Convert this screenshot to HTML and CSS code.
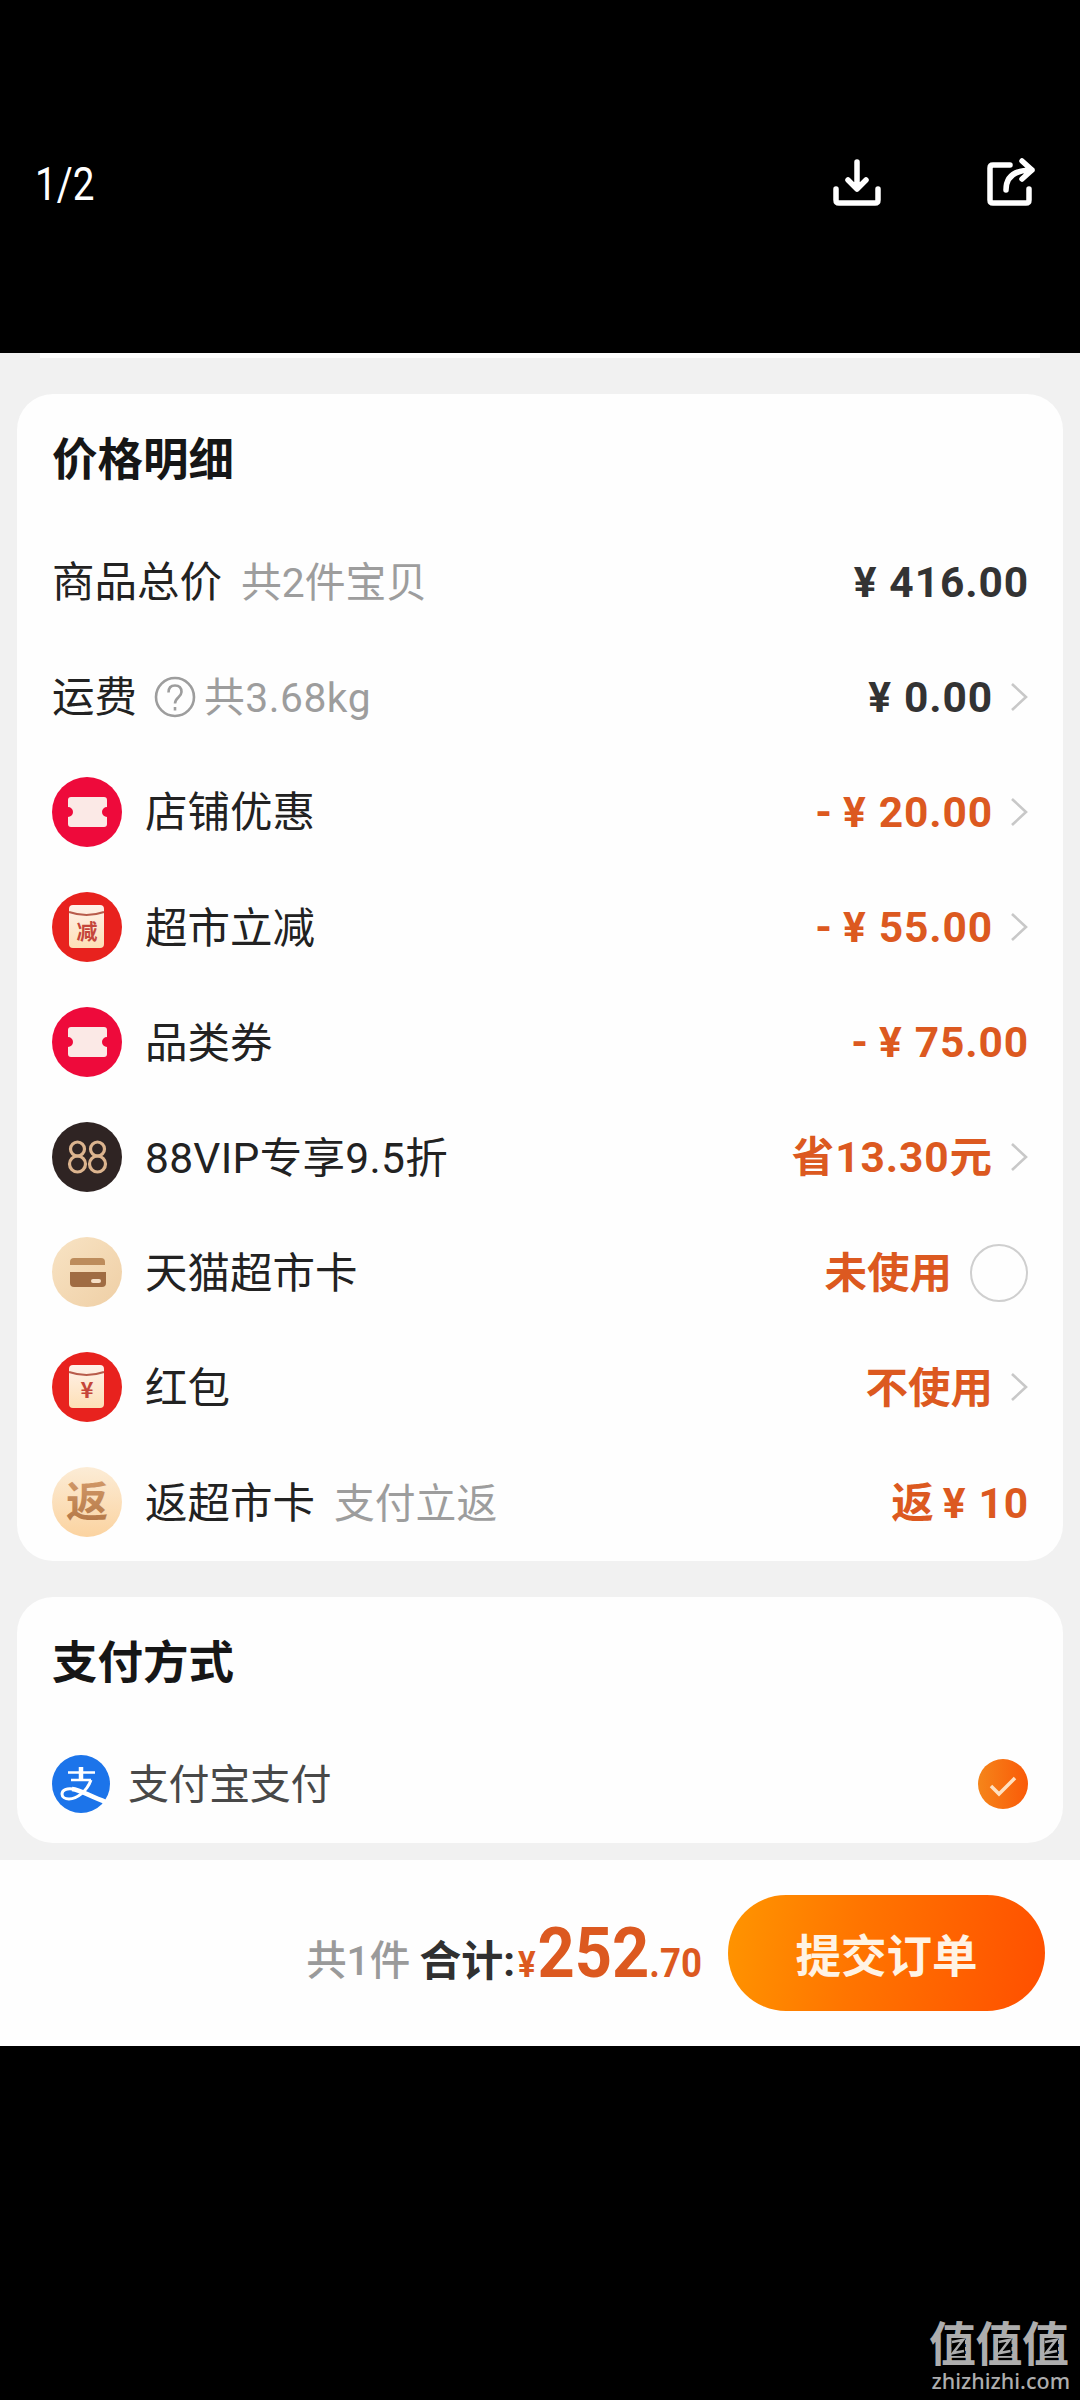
FILE: index.html
```html
<!DOCTYPE html>
<html lang="zh-CN">
<head>
<meta charset="utf-8">
<title>价格明细</title>
<link rel="stylesheet" href="styles.css">
</head>
<body>
<svg class="defs" aria-hidden="true">
  <defs>
    <linearGradient id="cream" x1="0" y1="0" x2="0" y2="1"><stop offset="0" stop-color="#fff1ea"/><stop offset="1" stop-color="#fde0b6"/></linearGradient>
    <linearGradient id="sand" x1="0" y1="0" x2="1" y2="1"><stop offset="0" stop-color="#f8e3c4"/><stop offset="1" stop-color="#efcfa5"/></linearGradient>
    <linearGradient id="peach" x1="0" y1="0" x2="0" y2="1"><stop offset="0" stop-color="#fcecd6"/><stop offset="1" stop-color="#fbd3a0"/></linearGradient>
    <linearGradient id="brown" x1="0" y1="0" x2="0" y2="1"><stop offset="0" stop-color="#d9a070"/><stop offset="1" stop-color="#b07443"/></linearGradient>
    <linearGradient id="orange" x1="0" y1="0" x2="1" y2="0"><stop offset="0" stop-color="#f5851a"/><stop offset="1" stop-color="#fa5a08"/></linearGradient>
    <symbol id="chevron" viewBox="0 0 18 30"><path d="M2 2 16 15 2 28" fill="none" stroke="#c8c8c8" stroke-width="2.6"/></symbol>
    <symbol id="ticket" viewBox="0 0 70 70"><circle cx="35" cy="35" r="35" fill="#ee0a3b"/><path d="M19 20h33a3 3 0 0 1 3 3v7a5 5 0 0 0 0 10v7a3 3 0 0 1-3 3H19a3 3 0 0 1-3-3v-7a5 5 0 0 0 0-10v-7a3 3 0 0 1 3-3Z" fill="#fbe9e6"/></symbol>
    <symbol id="packet" viewBox="0 0 70 70"><circle cx="35" cy="35" r="35" fill="#e8221e"/><rect x="17" y="13" width="35" height="43" rx="4" fill="url(#cream)"/><path d="M17 20q17.500 6 35 0" fill="none" stroke="#b85b4b" stroke-width="2"/></symbol>
  </defs>
</svg>
<header class="viewer-bar">
  <span class="counter">1/2</span>
  <div class="tools">
    <svg class="tool" viewBox="0 0 50 50" fill="none" stroke="#fff" stroke-width="5.500" stroke-linecap="round" stroke-linejoin="round"><path d="M26 5v27M17 23l9 9 9-9M5 32v11q0 3 3 3h36q3 0 3-3V32"/></svg>
    <svg class="tool" viewBox="0 0 50 50" fill="none" stroke="#fff" stroke-width="5.500" stroke-linecap="round" stroke-linejoin="round"><path d="M25 8H8q-3 0-3 3v32q0 3 3 3h33q3 0 3-3V32M21 33q0-20 26-20M37 4l10 9-10 9"/></svg>
  </div>
</header>
<main class="sheet">
  <div class="previous"></div>
  <section class="card prices">
    <h2 class="title">价格明细</h2>
    <div class="row"><span class="label">商品总价</span><span class="note">共2件宝贝</span><span class="value dark"><i class="yen">¥</i>416.00</span></div>
    <div class="row"><span class="label">运费</span>
      <svg class="help" viewBox="0 0 42 42" fill="none" stroke="#9d9d9d" stroke-width="2.600"><circle cx="21" cy="21" r="19"/><path d="M14.500 16.500q0-7 6.500-7t6.500 6.500c0 5-6.500 5.500-6.500 11.500"/><path d="M21 31v3.500"/></svg>
      <span class="note tight">共3.68kg</span><span class="value dark"><i class="yen">¥</i>0.00</span><svg class="chevron"><use href="#chevron"/></svg></div>
    <div class="row"><svg class="icon"><use href="#ticket"/></svg><span class="label">店铺优惠</span><span class="value"><i class="minus">-</i><i class="yen">¥</i>20.00</span><svg class="chevron"><use href="#chevron"/></svg></div>
    <div class="row"><svg class="icon" viewBox="0 0 70 70"><use href="#packet"/><text class="glyph" x="35" y="47" font-size="21" fill="#c5463a">减</text></svg><span class="label">超市立减</span><span class="value"><i class="minus">-</i><i class="yen">¥</i>55.00</span><svg class="chevron"><use href="#chevron"/></svg></div>
    <div class="row"><svg class="icon"><use href="#ticket"/></svg><span class="label">品类券</span><span class="value"><i class="minus">-</i><i class="yen">¥</i>75.00</span></div>
    <div class="row"><svg class="icon" viewBox="0 0 70 70"><circle cx="35" cy="35" r="35" fill="#2f2423"/><g fill="none" stroke="#dcb48e" stroke-width="3.200"><circle cx="25.500" cy="27" r="7"/><circle cx="25.500" cy="42" r="8"/><circle cx="45.500" cy="27" r="7"/><circle cx="45.500" cy="42" r="8"/></g></svg><span class="label wide">88VIP专享9.5折</span><span class="value">省13.30元</span><svg class="chevron"><use href="#chevron"/></svg></div>
    <div class="row"><svg class="icon" viewBox="0 0 70 70"><circle cx="35" cy="35" r="35" fill="url(#sand)"/><path d="M18 28v-3q0-4 4-4h27q4 0 4 4v3Z" fill="#bd8c5c"/><path d="M18 35h36v11q0 4-4 4H22q-4 0-4-4Z" fill="#a06c43"/><rect x="39" y="42" width="10" height="4" rx="2" fill="#f6dfc6"/></svg><span class="label">天猫超市卡</span><span class="value plain">未使用</span><span class="radio"></span></div>
    <div class="row"><svg class="icon" viewBox="0 0 70 70"><use href="#packet"/><text class="glyph" x="35" y="46" font-size="22" fill="#c5463a">¥</text></svg><span class="label">红包</span><span class="value plain">不使用</span><svg class="chevron"><use href="#chevron"/></svg></div>
    <div class="row"><svg class="icon" viewBox="0 0 70 70"><circle cx="35" cy="35" r="35" fill="url(#peach)"/><text class="glyph" x="35" y="50" font-size="42" fill="url(#brown)">返</text></svg><span class="label">返超市卡</span><span class="note">支付立返</span><span class="value">返<i class="yen mid">¥</i>10</span></div>
  </section>
  <section class="card payment">
    <h2 class="title">支付方式</h2>
    <div class="method">
      <svg class="alipay" viewBox="0 0 58 58"><circle cx="29" cy="29" r="29" fill="#1c74ea"/><g fill="none" stroke="#fff"><path d="M16 17.500h27M19 25h20" stroke-width="2.600"/><path d="M29 12v13" stroke-width="4.500"/><path d="M39 25C35 36 25 44 17 44c-4 0-7-2-7-5 0-4 5-6 11-5" stroke-width="3"/><path d="M20 34c9 1 17 7 34 13" stroke-width="4.500"/></g></svg>
      <span class="method-name">支付宝支付</span>
      <svg class="check" viewBox="0 0 50 50"><circle cx="25" cy="25" r="25" fill="url(#orange)"/><path d="M13 27l8 8 16-16" fill="none" stroke="#ffe0c0" stroke-width="3.500"/></svg>
    </div>
  </section>
  <footer class="submit-bar">
    <span class="count">共1件</span>
    <span class="total">合计:</span>
    <span class="price"><span class="price-inner"><small class="unit">¥</small>252<small>.70</small></span></span>
    <button class="submit">提交订单</button>
  </footer>
</main>
<aside class="brand">
  <svg class="brand-logo" viewBox="0 0 141 48">
    <g class="brand-name"><text x="0" y="41.500">值</text><text x="46.500" y="41.500">值</text><text x="93" y="41.500">值</text></g>
    <g class="brand-mark"><path class="hole" d="M22.500 19h13.500v18H22.500Z"/><path d="M23 23l11-2-10 13 11-2"/></g>
    <g class="brand-mark" transform="translate(46.500)"><path class="hole" d="M22.500 19h13.500v18H22.500Z"/><path d="M23 23l11-2-10 13 11-2"/></g>
    <g class="brand-mark" transform="translate(93)"><path class="hole" d="M22.500 19h13.500v18H22.500Z"/><path d="M23 23l11-2-10 13 11-2"/></g>
  </svg>
  <span class="brand-url">zhizhizhi.com</span>
</aside>
</body>
</html>
```
FILE: styles.css
```css
* { box-sizing: border-box; }
body {
  margin: 0;
  width: 1080px;
  height: 2400px;
  display: flex;
  flex-direction: column;
  background: #000;
  font-family: Roboto, "Noto Sans CJK SC", sans-serif;
  line-height: 1;
}
.defs { position: absolute; width: 0; height: 0; }
i { font-style: normal; }
.viewer-bar {
  height: 353px;
  padding: 157px 45px 0 35px;
  display: flex;
  justify-content: space-between;
  align-items: flex-start;
  color: #fff;
}
.counter { font-size: 46px; line-height: 54px; transform: scaleX(.84); transform-origin: 0 50%; }
.tools { display: flex; gap: 104px; }
.tool { width: 50px; height: 50px; }

.sheet { height: 1693px; background: #f1f1f1; }
.previous { height: 5px; margin: 0 40px 36px; background: #fdfdfd; }
.card { margin: 0 17px; padding: 0 35px; background: #fefefe; border-radius: 36px; }
.prices { height: 1167px; margin-bottom: 36px; }
.payment { height: 246px; }
.title { margin: 0; padding-top: 3px; font-size: 45.500px; font-weight: 700; line-height: 128px; color: #161616; }
.row { height: 115.100px; display: flex; align-items: center; }
.label { padding-top: 2px; font-size: 42.500px; color: #222; }
.wide { letter-spacing: .3px; }
.icon { width: 70px; height: 70px; margin: -2px 23px 0 0; flex: none; }
.glyph { font-family: "Noto Sans CJK SC", sans-serif; font-weight: 700; text-anchor: middle; }
.note { margin-left: 19px; padding-top: 2px; font-size: 40.800px; color: #9d9d9d; }
.help { width: 42px; height: 42px; margin: -2px 0 0 17px; }
.tight { margin-left: 8px; letter-spacing: .5px; }
.value { margin-left: auto; margin-right: -1px; padding-top: 1px; font-size: 42.500px; font-weight: 700; letter-spacing: .9px; color: #dc5920; white-space: nowrap; }
.plain { letter-spacing: 0; padding-top: 2px; }
.dark { color: #333; }
.yen { margin-right: 12px; }
.minus { margin-right: 10px; }
.mid { margin-left: 8px; }
.chevron { width: 18px; height: 30px; margin: -2px 0 0 18px; flex: none; }
.radio { width: 58px; height: 58px; margin-left: 19px; border: 2.500px solid #cfcfcf; border-radius: 50%; }

.method { height: 58px; margin-top: 27px; display: flex; align-items: center; }
.alipay { width: 58px; height: 58px; margin-right: 18px; }
.method-name { padding-top: 2px; font-size: 41px; letter-spacing: -.4px; color: #484848; }
.check { width: 50px; height: 50px; margin-left: auto; }

.submit-bar {
  height: 186px;
  margin-top: 17px;
  padding: 0 35px 0 0;
  display: flex;
  justify-content: flex-end;
  align-items: center;
  background: #fefefe;
  font-weight: 700;
}
.count { margin-right: 9px; padding-top: 17px; font-size: 40.500px; color: #9a9a9a; font-weight: 500; }
.total { padding-top: 17px; font-size: 42px; color: #303030; }
.price { width: 182px; margin: -2px 28px 0 3px; color: #dc5920; font-size: 71px; white-space: nowrap; }
.price-inner { display: inline-block; transform: scaleX(.915); transform-origin: 0 50%; }
.price small { font-size: 40px; }
.price .unit { font-size: 36px; margin-right: 2px; }
.submit {
  width: 317px;
  height: 116px;
  border: 0;
  border-radius: 58px;
  background: linear-gradient(100deg, #ff9500, #ff7500 40%, #ff4f00);
  color: #fff3e4;
  font: 700 45.500px "Noto Sans CJK SC", sans-serif;
}
.brand {
  margin-top: auto;
  padding: 0 10px 7px 0;
  display: flex;
  flex-direction: column;
  align-items: flex-end;
  color: #adadad;
}
.brand-logo { width: 141px; height: 48px; margin-bottom: 2px; overflow: visible; }
.brand-name { font: 700 47px "Noto Sans CJK SC", sans-serif; fill: #adadad; }
.brand-mark { fill: none; stroke: #adadad; stroke-width: 2.600; }
.brand-mark .hole { fill: #000; stroke: none; }
.brand-url { font: 500 21.500px/24px "Noto Sans", sans-serif; }
```
